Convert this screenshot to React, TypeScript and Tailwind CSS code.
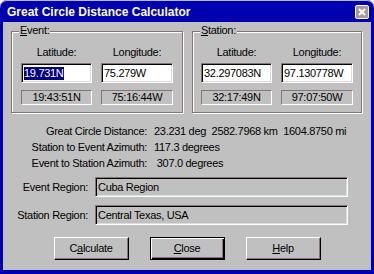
import React from 'react';

const font = "font-['Liberation_Sans',Arial,sans-serif]";

const sunken =
  'border border-t-[#857575] border-l-[#857575] border-b-white border-r-white shadow-[inset_1px_1px_0_#000,inset_-1px_-1px_0_#dcdcdc]';

const CoordInput = ({ value, selected, w }: { value: string; selected?: boolean; w: string }) => (
  <div className={`${w} h-[20px] bg-white ${sunken} flex items-center pl-[2px]`}>
    {selected ? <span className="bg-[#000080] text-white leading-[13px]">{value}</span> : <span>{value}</span>}
  </div>
);

const Readout = ({ value, w }: { value: string; w: string }) => (
  <div className={`${w} h-[15px] border border-t-[#857575] border-l-[#857575] border-b-white border-r-white flex items-center justify-center leading-none`}>
    {value}
  </div>
);

const Group = ({
  mnemonic,
  rest,
  width,
  lat,
  lon,
  latDms,
  lonDms,
  selected,
  pad,
}: {
  mnemonic: string;
  rest: string;
  width: string;
  lat: string;
  lon: string;
  latDms: string;
  lonDms: string;
  selected?: boolean;
  pad: string;
}) => (
  <div className={`relative ${width} h-[82px] border border-[#857575] shadow-[1px_1px_0_#fff,inset_1px_1px_0_#fff] ${pad} pt-[14px]`}>
    <span className="absolute -top-[8px] left-[7px] px-[1px] bg-[#c0c0c0] leading-[13px]">
      <span className="underline">{mnemonic}</span>
      {rest}
    </span>
    <div className="flex gap-[9px]">
      <div className="flex flex-col items-center">
        <div className="h-[13px] leading-[13px] mb-[4px]">Latitude:</div>
        <CoordInput value={lat} selected={selected} w="w-[71px]" />
        <div className="mt-[7px]">
          <Readout value={latDms} w="w-[71px]" />
        </div>
      </div>
      <div className="flex flex-col items-center">
        <div className="h-[13px] leading-[13px] mb-[4px]">Longitude:</div>
        <CoordInput value={lon} w="w-[72px]" />
        <div className="mt-[7px]">
          <Readout value={lonDms} w="w-[72px]" />
        </div>
      </div>
    </div>
  </div>
);

const Button = ({ pre, key1, post, isDefault }: { pre: string; key1: string; post: string; isDefault?: boolean }) => (
  <div
    className={`w-[75px] h-[23px] flex items-center justify-center ${
      isDefault
        ? 'border border-black shadow-[inset_1px_1px_0_#fff,inset_-1px_-1px_0_#000,inset_-2px_-2px_0_#857575]'
        : 'border border-t-white border-l-white border-b-black border-r-black shadow-[inset_-1px_-1px_0_#857575]'
    }`}
  >
    <span>
      {pre}
      <span className="underline">{key1}</span>
      {post}
    </span>
  </div>
);

export default function App() {
  return (
    <div className={`w-[374px] h-[274px] bg-white ${font} text-[11px] tracking-[-0.3px] text-black`}>
      <div className="w-full h-full bg-[#0000b0] rounded-t-[7px] shadow-[inset_0_1px_0_#b8b8e8] flex flex-col">
        <div className="h-[22px] flex items-center justify-between pl-[7px] pr-[5px] pt-[1px]">
          <span className="text-white font-bold text-[12px] tracking-normal">Great Circle Distance Calculator</span>
          <div className="w-[14px] h-[14px] rounded-[2px] bg-[#a89898] border border-white flex items-center justify-center">
            <svg width="8" height="8" viewBox="0 0 8 8">
              <path d="M1 1 L7 7 M7 1 L1 7" stroke="#fff" strokeWidth="2" />
            </svg>
          </div>
        </div>
        <div className="flex-1 mx-[3px] mb-[4px] bg-[#c0c0c0] flex flex-col">
          <div className="flex gap-[9px] pl-[8px] pt-[9px]">
            <Group
              mnemonic="E"
              rest="vent:"
              width="w-[172px]"
              pad="pl-[9px]"
              lat="19.731N"
              lon="75.279W"
              latDms="19:43:51N"
              lonDms="75:16:44W"
              selected
            />
            <Group
              mnemonic="S"
              rest="tation:"
              width="w-[170px]"
              pad="pl-[8px]"
              lat="32.297083N"
              lon="97.130778W"
              latDms="32:17:49N"
              lonDms="97:07:50W"
            />
          </div>

          <div className="mt-[10px] grid grid-cols-[144px_1fr] gap-x-[7px] leading-[16px]">
            <div className="text-right">Great Circle Distance:</div>
            <div className="whitespace-pre">23.231 deg  2582.7968 km  1604.8750 mi</div>
            <div className="text-right">Station to Event Azimuth:</div>
            <div className="whitespace-pre">117.3 degrees</div>
            <div className="text-right">Event to Station Azimuth:</div>
            <div className="whitespace-pre"> 307.0 degrees</div>
          </div>

          <div className="mt-[6px] flex flex-col gap-[8px]">
            <div className="flex items-center">
              <div className="w-[85px] text-right">Event Region:</div>
              <div className={`ml-[7px] w-[253px] h-[20px] ${sunken} flex items-center pl-[2px]`}>Cuba Region</div>
            </div>
            <div className="flex items-center">
              <div className="w-[85px] text-right">Station Region:</div>
              <div className={`ml-[7px] w-[253px] h-[20px] ${sunken} flex items-center pl-[2px]`}>Central Texas, USA</div>
            </div>
          </div>

          <div className="mt-[12px] flex justify-center gap-[21px]">
            <Button pre="C" key1="a" post="lculate" />
            <Button pre="" key1="C" post="lose" isDefault />
            <Button pre="" key1="H" post="elp" />
          </div>
        </div>
      </div>
    </div>
  );
}
